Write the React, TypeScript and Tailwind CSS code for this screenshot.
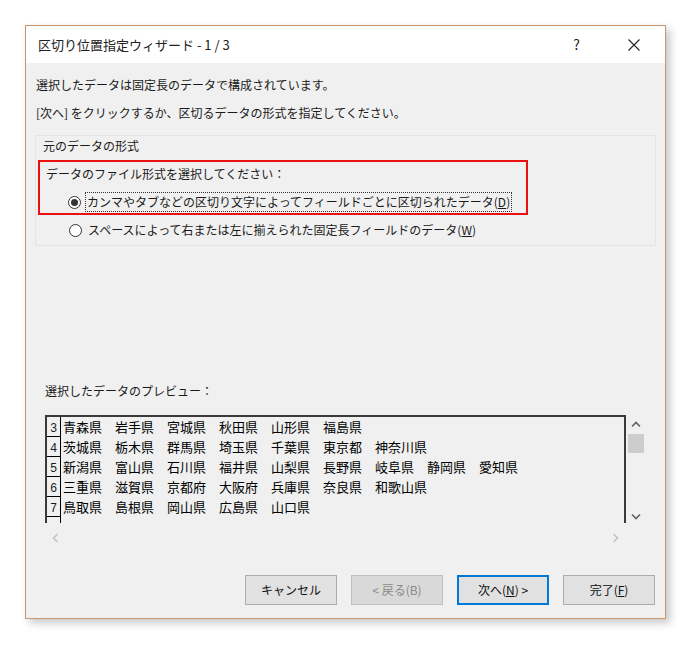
import React from 'react';

const jp = '[font-family:"Noto_Sans_CJK_JP","Noto_Sans",sans-serif]';

const rows: [string, string][] = [
  ['3', '青森県　岩手県　宮城県　秋田県　山形県　福島県'],
  ['4', '茨城県　栃木県　群馬県　埼玉県　千葉県　東京都　神奈川県'],
  ['5', '新潟県　富山県　石川県　福井県　山梨県　長野県　岐阜県　静岡県　愛知県'],
  ['6', '三重県　滋賀県　京都府　大阪府　兵庫県　奈良県　和歌山県'],
  ['7', '鳥取県　島根県　岡山県　広島県　山口県'],
];

const Radio: React.FC<{ checked?: boolean }> = ({ checked }) => (
  <span className="w-[13px] h-[13px] rounded-full border border-[#333] bg-white flex items-center justify-center shrink-0">
    {checked && <span className="w-[7px] h-[7px] rounded-full bg-[#333]" />}
  </span>
);

const Button: React.FC<{ children: React.ReactNode; variant?: 'default' | 'disabled' | 'primary' }> = ({
  children,
  variant = 'default',
}) => {
  const cls =
    variant === 'primary'
      ? 'border-2 border-[#0078d7] bg-[#e1e1e1] text-[#111]'
      : variant === 'disabled'
        ? 'border border-[#bfbfbf] bg-[#d9d9d9] text-[#8a8a8a]'
        : 'border border-[#adadad] bg-[#e1e1e1] text-[#111]';
  return (
    <div className={`w-[92px] h-[30px] flex items-center justify-center text-[12px] ${cls}`}>{children}</div>
  );
};

const App: React.FC = () => {
  return (
    <div className={`min-h-screen bg-white pt-[25px] pl-[25px] text-[#1a1a1a] ${jp}`}>
      <div className="w-[641px] h-[594px] border border-[#c9956b] bg-[#f0f0f0] flex flex-col shadow-[4px_4px_8px_rgba(0,0,0,0.22)]">
        {/* title bar */}
        <div className="h-[37px] bg-white flex items-center pl-[12px] shrink-0">
          <span className="text-[13px] text-[#222]">区切り位置指定ウィザード - 1 / 3</span>
          <span className="ml-auto text-[14px] text-[#222] mr-[48px]">?</span>
          <svg width="12" height="12" viewBox="0 0 12 12" className="mr-[25px]">
            <path d="M0.5 0.5 L11.5 11.5 M11.5 0.5 L0.5 11.5" stroke="#222" strokeWidth="1.1" />
          </svg>
        </div>

        {/* body */}
        <div className="flex flex-col px-[9px] flex-1">
          <p className="mt-[14px] h-[16px] leading-[16px] pl-[1px] text-[12px]">
            選択したデータは固定長のデータで構成されています。
          </p>
          <p className="mt-[12px] h-[16px] leading-[16px] pl-[1px] text-[12px]">
            [次へ] をクリックするか、区切るデータの形式を指定してください。
          </p>

          {/* group box */}
          <div className="mt-[14px] h-[111px] border border-[#e4e4e4] flex flex-col">
            <div className="h-[16px] mt-[2px] leading-[16px] pl-[7px] text-[12px]">元のデータの形式</div>
            <div className="mt-[6px] ml-[2px] w-[490px] h-[55px] border-2 border-[#e81010] flex flex-col">
              <div className="h-[16px] mt-[4px] leading-[16px] pl-[6px] text-[12px]">
                データのファイル形式を選択してください：
              </div>
              <div className="mt-[10px] flex items-center pl-[28px] h-[20px]">
                <Radio checked />
                <span className="ml-[4px] h-[20px] leading-[18px] px-[1px] border border-dotted border-[#333] text-[12px]">
                  カンマやタブなどの区切り文字によってフィールドごとに区切られたデータ(<span className="underline">D</span>)
                </span>
              </div>
            </div>
            <div className="mt-[6px] flex items-center pl-[33px] h-[18px]">
              <Radio />
              <span className="ml-[6px] text-[12px] leading-[18px]">
                スペースによって右または左に揃えられた固定長フィールドのデータ(<span className="underline">W</span>)
              </span>
            </div>
          </div>

          {/* preview */}
          <div className="mt-[137px] h-[16px] leading-[16px] pl-[10px] text-[12px]">選択したデータのプレビュー：</div>
          <div className="mt-[16px] flex pl-[10px]">
            <div className="w-[581px] h-[108px] border-t-2 border-x-2 border-[#3a3a3a] bg-[#f0f0f0] overflow-hidden">
              {rows.map(([n, text]) => (
                <div key={n} className="flex h-[20px]">
                  <div className="w-[14px] border-r border-b border-black text-[12px] leading-[20px] text-center [font-family:'Liberation_Mono',monospace] pt-[2px]">
                    {n}
                  </div>
                  <div className="pl-[2px] text-[13px] leading-[20px] whitespace-pre text-black [font-family:'Noto_Sans_CJK_JP',sans-serif]">
                    {text}
                  </div>
                </div>
              ))}
              <div className="flex h-[20px]">
                <div className="w-[14px] border-r border-black" />
              </div>
            </div>
            {/* vertical scrollbar */}
            <div className="w-[16px] ml-[2px] h-[108px] flex flex-col items-center">
              <svg width="10" height="7" viewBox="0 0 10 7" className="mt-[6px]">
                <path d="M1 5.5 L5 1.5 L9 5.5" stroke="#606060" strokeWidth="1.6" fill="none" />
              </svg>
              <div className="mt-[6px] w-[16px] h-[19px] bg-[#cdcdcd]" />
              <svg width="10" height="7" viewBox="0 0 10 7" className="mt-auto mb-[3px]">
                <path d="M1 1.5 L5 5.5 L9 1.5" stroke="#606060" strokeWidth="1.6" fill="none" />
              </svg>
            </div>
          </div>
          {/* horizontal scrollbar */}
          <div className="h-[16px] mt-[7px] ml-[10px] w-[581px] flex items-center justify-between px-[7px]">
            <svg width="7" height="10" viewBox="0 0 7 10">
              <path d="M5.5 1 L1.5 5 L5.5 9" stroke="#c4c4c4" strokeWidth="1.6" fill="none" />
            </svg>
            <svg width="7" height="10" viewBox="0 0 7 10">
              <path d="M1.5 1 L5.5 5 L1.5 9" stroke="#c4c4c4" strokeWidth="1.6" fill="none" />
            </svg>
          </div>

          {/* buttons */}
          <div className="mt-auto mb-[13px] flex justify-end gap-[14px] pr-[1px]">
            <Button>キャンセル</Button>
            <Button variant="disabled">&lt; 戻る(B)</Button>
            <Button variant="primary">
              次へ(<span className="underline">N</span>) &gt;
            </Button>
            <Button>
              完了(<span className="underline">F</span>)
            </Button>
          </div>
        </div>
      </div>
    </div>
  );
};

export default App;
